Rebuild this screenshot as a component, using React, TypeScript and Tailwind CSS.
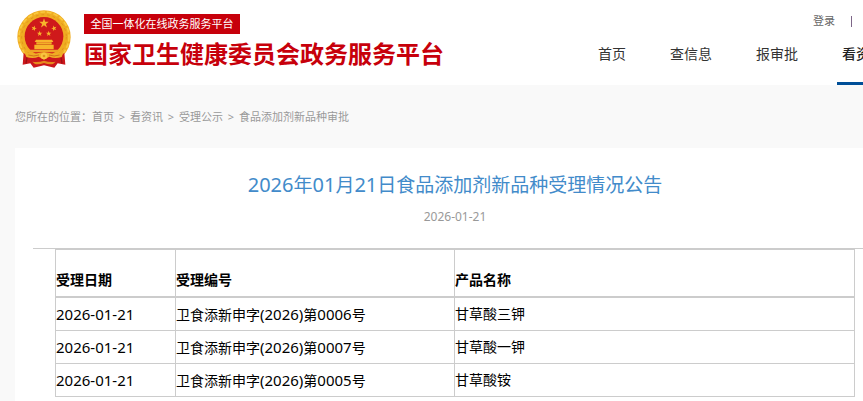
import { clsx } from "clsx";

const STAR = "0,-10 2.4,-3.2 9.5,-3.1 3.8,1.2 5.9,8.1 0,4 -5.9,8.1 -3.8,1.2 -9.5,-3.1 -2.4,-3.2";

const crumbs = ["首页", "看资讯", "受理公示", "食品添加剂新品种审批"];

const nav = [
  { label: "首页", active: false },
  { label: "查信息", active: false },
  { label: "报审批", active: false },
  { label: "看资讯", active: true },
];

const rows = [
  { date: "2026-01-21", code: "卫食添新申字(2026)第0006号", product: "甘草酸三钾" },
  { date: "2026-01-21", code: "卫食添新申字(2026)第0007号", product: "甘草酸一钾" },
  { date: "2026-01-21", code: "卫食添新申字(2026)第0005号", product: "甘草酸铵" },
];

/* Latin runs are set slightly larger than the Chinese text around them. */
function Mixed({ text, latin }: { text: string; latin: string }) {
  return (
    <>
      {text.split(/([\x20-\x7e]+)/).map((part, i) =>
        i % 2 === 1 ? (
          <span key={i} className={latin}>
            {part}
          </span>
        ) : (
          part
        ),
      )}
    </>
  );
}

function Emblem() {
  return (
    <svg viewBox="0 0 162 174" className="h-[58px] w-[54px] shrink-0" role="img" aria-label="国徽">
      <circle cx="81" cy="81" r="80" fill="#f0ac22" />
      <circle cx="81" cy="81" r="75" fill="none" stroke="#f9c93f" strokeWidth="5" strokeDasharray="14 6" />
      <circle cx="81" cy="81" r="67" fill="none" stroke="#e0961a" strokeWidth="3" strokeDasharray="8 9" />
      <circle cx="81" cy="79" r="58" fill="#cf191b" />
      <path d="M20 128 Q32 142 52 138 L110 138 Q130 142 142 128 L145 164 L122 160 L112 173 L81 166 L50 173 L40 160 L17 164Z" fill="#cb171c" />
      <path d="M30 142 L27 160 M132 142 L135 160" stroke="#9d1014" strokeWidth="4" />
      <g fill="#f7b52b">
        <polygon points={STAR} transform="translate(81 40) scale(1.5)" />
        <polygon points={STAR} transform="translate(51 55) rotate(15) scale(.85)" />
        <polygon points={STAR} transform="translate(111 55) rotate(-15) scale(.85)" />
        <polygon points={STAR} transform="translate(68 71) scale(.85)" />
        <polygon points={STAR} transform="translate(95 71) scale(.85)" />
        <path d="M57 89 H105 L109 96 H53Z M58 97 H104 V103 H58Z M52 104 H110 V118 H52Z" />
        <path d="M34 119 H128 L120 127 H42Z" fill="#eda326" />
      </g>
      <path d="M60 103 H102" stroke="#d38b16" strokeWidth="2" />
      <path
        d="M21 122 Q40 137 60 130 L81 126 L102 130 Q122 137 141 122 L134 141 Q113 147 97 140 L81 149 L65 140 Q49 147 28 141Z"
        fill="#efae25"
      />
      <path d="M34 135 Q51 141 66 135 M128 135 Q111 141 96 135" fill="none" stroke="#d4701c" strokeWidth="3" />
      <circle cx="81" cy="138" r="10" fill="#f9c541" />
      <circle cx="81" cy="138" r="4" fill="#de921f" />
      <path d="M46 155 Q64 158 81 152 Q98 158 116 155 L108 162 Q95 164 81 159 Q67 164 54 162Z" fill="#e58a1d" />
    </svg>
  );
}

function Header() {
  return (
    <header className="flex h-[85px] min-w-[895px] bg-white pl-[17px]">
      <div className="flex w-[576px] shrink-0 gap-[13px] pt-[10px]">
        <Emblem />
        <div className="pt-1 text-[#c7000b]">
          <p className="flex h-5 w-[156px] items-center justify-center bg-[#c7000b] text-[11px] whitespace-nowrap text-white">
            全国一体化在线政务服务平台
          </p>
          <h1 className="pt-1 text-[24px] leading-8 font-bold whitespace-nowrap">国家卫生健康委员会政务服务平台</h1>
        </div>
      </div>
      <div className="flex grow flex-col justify-between">
        <div className="flex items-center gap-4 pt-3 pl-[220px] text-[11px] leading-[18px] text-[#666]">
          <a href="#login" className="whitespace-nowrap">
            登录
          </a>
          <span className="h-[11px] w-px bg-[#7d6688]" />
        </div>
        <nav className="flex gap-[34px] text-[14px] text-[#333]">
          {nav.map((item) => (
            <a
              key={item.label}
              href="#nav"
              className={clsx(
                "flex h-[46px] shrink-0 items-start border-b-3 px-[5px] pt-[3px] leading-6 whitespace-nowrap",
                item.active ? "border-[#004f98] font-medium text-[#222]" : "border-transparent",
              )}
            >
              {item.label}
            </a>
          ))}
        </nav>
      </div>
    </header>
  );
}

export default function App() {
  return (
    <div className="min-h-screen overflow-hidden bg-[#f9f9f9] font-['Noto_Sans','Noto_Sans_CJK_SC',sans-serif] text-black">
      <Header />
      <div className="min-w-[895px] pl-[15px]">
        <div className="flex h-[63px] items-center pt-[2px] text-[11px] text-[#999]">
          <span>您所在的位置：</span>
          <ol className="flex">
            {crumbs.map((crumb, i) => (
              <li key={crumb} className="flex">
                {i > 0 && <span className="w-4 text-center">&gt;</span>}
                <a href="#crumb">{crumb}</a>
              </li>
            ))}
          </ol>
        </div>
        <main className="bg-white px-[18px] pt-[22px] pb-6">
          <h2 className="text-center text-[19px] leading-[30px] text-[#428bca]">
            <Mixed text="2026年01月21日食品添加剂新品种受理情况公告" latin="text-[20px]" />
          </h2>
          <p className="pt-2 pb-[22px] text-center text-[12px] leading-[18px] text-[#999]">2026-01-21</p>
          <div className="border-t border-[#ccc]">
            <table className="mx-auto w-[800px] table-fixed border-separate border-spacing-0 border-t border-l border-[#ccc] text-left text-[14px] leading-5">
              <colgroup>
                <col className="w-[120px]" />
                <col className="w-[279px]" />
                <col />
              </colgroup>
              <thead>
                <tr>
                  {["受理日期", "受理编号", "产品名称"].map((label) => (
                    <th key={label} className="h-12 border-r border-b-2 border-[#ccc] p-0 pt-[14px] font-bold">
                      {label}
                    </th>
                  ))}
                </tr>
              </thead>
              <tbody>
                {rows.map((row) => (
                  <tr key={row.code}>
                    {[row.date, row.code, row.product].map((value) => (
                      <td key={value} className="h-[33px] border-r border-b border-[#ccc] p-0">
                        <Mixed text={value} latin="text-[15px]" />
                      </td>
                    ))}
                  </tr>
                ))}
              </tbody>
            </table>
          </div>
        </main>
      </div>
    </div>
  );
}
